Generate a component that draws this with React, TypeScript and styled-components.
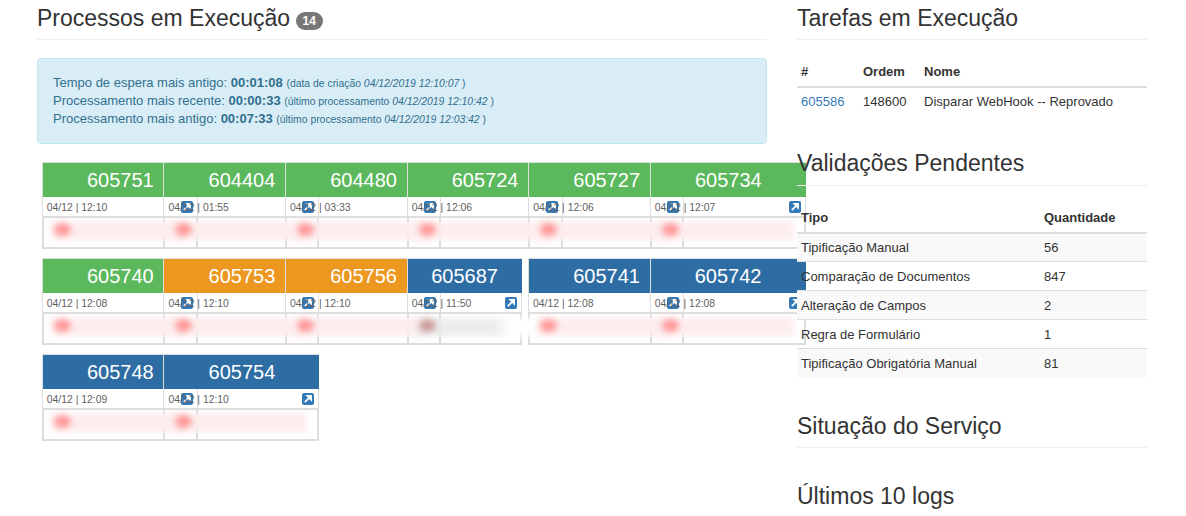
import React from "react";
import styled, { createGlobalStyle } from "styled-components";

const Global = createGlobalStyle`
  html, body { margin: 0; padding: 0; background: #fff; overflow: hidden; }
  body { font-family: "Liberation Sans", Arial, sans-serif; color: #333; font-size: 13px; }
`;

const Page = styled.div`
  display: flex;
  gap: 30px;
  padding-left: 37px;
  width: 1186px;
  height: 516px;
  box-sizing: border-box;
  overflow: hidden;
`;
const LeftColumn = styled.main`
  flex: 0 0 730px;
  width: 730px;
`;
const RightColumn = styled.aside`
  flex: 0 0 350px;
  width: 350px;
  position: relative;
  z-index: 1;
`;
const PageHeader = styled.h3<{ $gapBottom?: number }>`
  margin: 5px 0 ${(p) => p.$gapBottom ?? 17}px;
  padding-bottom: 8px;
  border-bottom: 1px solid #eee;
  font-size: 23px;
  line-height: 26.4px;
  font-weight: 400;
  color: #333;
`;
const Badge = styled.span`
  display: inline-block;
  margin: 2px 0 0 -1px;
  padding: 3px 7px;
  min-width: 10px;
  font-size: 12px;
  line-height: 1;
  font-weight: 700;
  color: #fff;
  background: #777;
  border-radius: 10px;
  vertical-align: middle;
`;
const InfoAlert = styled.div`
  box-sizing: border-box;
  height: 86px;
  padding: 15px;
  margin-bottom: 18px;
  background: #d9edf7;
  border: 1px solid #bce8f1;
  border-radius: 4px;
  color: #31708f;
  font-size: 13px;
  line-height: 18px;
`;
const AlertLine = styled.div`
  white-space: nowrap;
`;
const Note = styled.small`
  font-size: 10.4px;
  line-height: 1;
`;
const CardRow = styled.div`
  display: flex;
  padding-left: 4.8px;
  margin-bottom: 9px;
  width: max-content;
`;
const toneColor = { green: "#5cb85c", orange: "#ec971f", blue: "#2e6da4" };
type Tone = keyof typeof toneColor;

const Card = styled.article<{ $compact?: boolean }>`
  flex: 0 0 auto;
  box-sizing: border-box;
  width: ${(p) => (p.$compact ? "115px" : "156px")};
  margin-right: ${(p) => (p.$compact ? "6.4px" : "-34.4px")};
  height: 87px;
  display: flex;
  flex-direction: column;
`;
const CardHead = styled.header<{ $tone: Tone }>`
  box-sizing: border-box;
  height: 35px;
  border: 1px solid #ddd;
  border-bottom: 0;
  border-right: 0;
  background: ${(p) => toneColor[p.$tone]};
  color: #fff;
  font-size: 20px;
  line-height: 34px;
  text-align: center;
`;
const CardMeta = styled.div`
  box-sizing: border-box;
  height: 19px;
  padding: 1px 4px 0;
  display: flex;
  align-items: center;
  justify-content: space-between;
  border-left: 1px solid #ddd;
  border-right: 1px solid #ddd;
  font-size: 10.4px;
  color: #5f5f5f;
`;
const CardBody = styled.div`
  flex: 1;
  box-sizing: border-box;
  border: 2px solid #ddd;
  padding: 4px 10px 0 7px;
`;
const Band = styled.div<{ $muted?: boolean }>`
  position: relative;
  height: 18px;
  width: ${(p) => (p.$muted ? "126px" : "100%")};
  background: ${(p) =>
    p.$muted ? "linear-gradient(90deg, #ececec 0 62%, #fff 76%)" : "#fdeded"};
  filter: blur(3px);
  &::before {
    content: "";
    position: absolute;
    left: 3px;
    top: 1px;
    width: 17px;
    height: 13px;
    border-radius: 50%;
    background: ${(p) => (p.$muted ? "rgba(190, 120, 120, 0.7)" : "rgba(255, 135, 135, 0.85)")};
  }
`;
const LinkIcon = styled.svg`
  width: 12px;
  height: 12px;
  flex: 0 0 auto;
`;

const OpenIcon = () => (
  <LinkIcon viewBox="0 0 12 12" aria-hidden="true">
    <rect width="12" height="12" rx="2" fill="#337ab7" />
    <path d="M2.8 9.2 7.4 4.6M5.4 2.9h3.7v3.7z" fill="#fff" stroke="#fff" strokeWidth="1.7" strokeLinejoin="miter" />
  </LinkIcon>
);

const Section = styled.section``;
const DataTable = styled.table<{ $gapBottom: number }>`
  width: 100%;
  border-collapse: collapse;
  margin-bottom: ${(p) => p.$gapBottom}px;
  font-size: 13px;
`;
const HeadCell = styled.th<{ $width?: number }>`
  width: ${(p) => (p.$width ? `${p.$width}px` : "auto")};
  height: 29px;
  padding: 0 4px;
  text-align: left;
  font-weight: 700;
  color: #333;
  border-bottom: 2px solid #ddd;
`;
const BodyRow = styled.tr<{ $striped?: boolean }>`
  background: ${(p) => (p.$striped ? "#f9f9f9" : "transparent")};
`;
const Cell = styled.td`
  height: 29px;
  padding: 0 4px;
  box-sizing: border-box;
  color: #333;
  border-bottom: 1px solid #ddd;
  ${BodyRow}:last-child & { border-bottom: 0; }
`;
const TaskCell = styled(Cell)`
  height: 28px;
`;
const TaskLink = styled.a`
  color: #337ab7;
  text-decoration: none;
`;

type Proc = { id: string; tone: Tone; date: string; compact?: boolean };
const rows: Proc[][] = [
  [
    { id: "605751", tone: "green", date: "04/12 | 12:10" },
    { id: "604404", tone: "green", date: "04/12 | 01:55" },
    { id: "604480", tone: "green", date: "04/12 | 03:33" },
    { id: "605724", tone: "green", date: "04/12 | 12:06" },
    { id: "605727", tone: "green", date: "04/12 | 12:06" },
    { id: "605734", tone: "green", date: "04/12 | 12:07" },
  ],
  [
    { id: "605740", tone: "green", date: "04/12 | 12:08" },
    { id: "605753", tone: "orange", date: "04/12 | 12:10" },
    { id: "605756", tone: "orange", date: "04/12 | 12:10" },
    { id: "605687", tone: "blue", date: "04/12 | 11:50", compact: true },
    { id: "605741", tone: "blue", date: "04/12 | 12:08" },
    { id: "605742", tone: "blue", date: "04/12 | 12:08" },
  ],
  [
    { id: "605748", tone: "blue", date: "04/12 | 12:09" },
    { id: "605754", tone: "blue", date: "04/12 | 12:10" },
  ],
];

const pending: [string, string][] = [
  ["Tipificação Manual", "56"],
  ["Comparação de Documentos", "847"],
  ["Alteração de Campos", "2"],
  ["Regra de Formulário", "1"],
  ["Tipificação Obrigatória Manual", "81"],
];

export default function App() {
  return (
    <>
      <Global />
      <Page>
        <LeftColumn>
          <PageHeader $gapBottom={18}>
            Processos em Execução <Badge>14</Badge>
          </PageHeader>
          <InfoAlert>
            <AlertLine>
              Tempo de espera mais antigo: <strong>00:01:08</strong>{" "}
              <Note>(data de criação <em>04/12/2019 12:10:07</em> )</Note>
            </AlertLine>
            <AlertLine>
              Processamento mais recente: <strong>00:00:33</strong>{" "}
              <Note>(último processamento <em>04/12/2019 12:10:42</em> )</Note>
            </AlertLine>
            <AlertLine>
              Processamento mais antigo: <strong>00:07:33</strong>{" "}
              <Note>(último processamento <em>04/12/2019 12:03:42</em> )</Note>
            </AlertLine>
          </InfoAlert>
          {rows.map((row, i) => (
            <CardRow key={i}>
              {row.map((p) => (
                <Card key={p.id} $compact={p.compact}>
                  <CardHead $tone={p.tone}>{p.id}</CardHead>
                  <CardMeta>
                    <span>{p.date}</span>
                    <OpenIcon />
                  </CardMeta>
                  <CardBody>
                    <Band $muted={p.compact} />
                  </CardBody>
                </Card>
              ))}
            </CardRow>
          ))}
        </LeftColumn>
        <RightColumn>
          <Section>
            <PageHeader>Tarefas em Execução</PageHeader>
            <DataTable $gapBottom={35}>
              <thead>
                <tr>
                  <HeadCell $width={54}>#</HeadCell>
                  <HeadCell $width={53}>Ordem</HeadCell>
                  <HeadCell>Nome</HeadCell>
                </tr>
              </thead>
              <tbody>
                <BodyRow>
                  <TaskCell><TaskLink href="#">605586</TaskLink></TaskCell>
                  <TaskCell>148600</TaskCell>
                  <TaskCell>Disparar WebHook -- Reprovado</TaskCell>
                </BodyRow>
              </tbody>
            </DataTable>
          </Section>
          <Section>
            <PageHeader>Validações Pendentes</PageHeader>
            <DataTable $gapBottom={35}>
              <thead>
                <tr>
                  <HeadCell $width={235}>Tipo</HeadCell>
                  <HeadCell>Quantidade</HeadCell>
                </tr>
              </thead>
              <tbody>
                {pending.map(([name, qty], i) => (
                  <BodyRow key={name} $striped={i % 2 === 0}>
                    <Cell>{name}</Cell>
                    <Cell>{qty}</Cell>
                  </BodyRow>
                ))}
              </tbody>
            </DataTable>
          </Section>
          <Section>
            <PageHeader $gapBottom={35}>Situação do Serviço</PageHeader>
            <PageHeader>Últimos 10 logs</PageHeader>
          </Section>
        </RightColumn>
      </Page>
    </>
  );
}
